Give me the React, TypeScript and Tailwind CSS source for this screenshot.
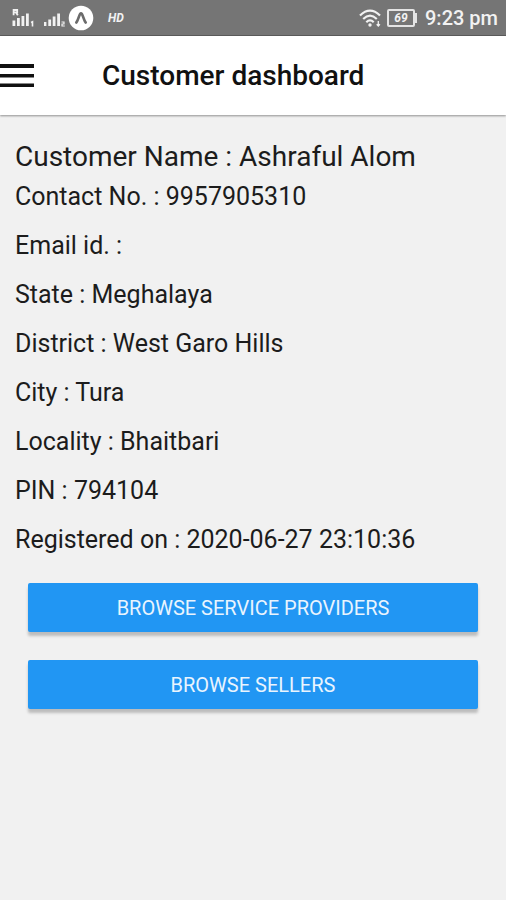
const details = [
  { label: "Contact No.", value: "9957905310" },
  { label: "Email id.", value: "" },
  { label: "State", value: "Meghalaya" },
  { label: "District", value: "West Garo Hills" },
  { label: "City", value: "Tura" },
  { label: "Locality", value: "Bhaitbari" },
  { label: "PIN", value: "794104" },
  { label: "Registered on", value: "2020-06-27 23:10:36" },
];

function SignalOne() {
  return (
    <svg width="24" height="20" viewBox="0 0 24 20" fill="currentColor" aria-hidden="true">
      {/* roaming mark */}
      <path d="M1.6 7.2V2h3.6v2.4H2M4 4.4 5.8 7.2" fill="none" stroke="currentColor" strokeWidth="1.8" />
      <path d="M.5 12.5h2.8V18H.5zM5 10h2.8v8H5zM9.5 8h2.8v10H9.5zM14 5.5h2.8V18H14z" />
      <path d="M19 14.5 20.5 13.8V18.5" fill="none" stroke="currentColor" strokeWidth="1.6" />
    </svg>
  );
}

function SignalTwo() {
  return (
    <svg width="24" height="20" viewBox="0 0 24 20" fill="currentColor" aria-hidden="true">
      <path d="M0 14h2.4v4H0zM4.3 11.5h2.8V18H4.3zM8.7 8.5h2.8V18H8.7zM13.2 5.5H16V18h-2.8z" />
      <path d="M17.5 14H20v2h-2v2h2.8" fill="none" stroke="currentColor" strokeWidth="1.2" />
    </svg>
  );
}

function AppBadge() {
  return (
    <svg width="26" height="26" viewBox="0 0 26 26" aria-hidden="true">
      <circle cx="13" cy="13" r="12.3" fill="#fff" />
      <path
        d="M8.3 17.5C9.9 15.8 11 10.5 12.2 8.8Q13 7.8 13.8 8.8C15 10.5 16.1 15.8 17.7 17.5"
        fill="none"
        stroke="#6b6b6b"
        strokeWidth="2.6"
        strokeLinecap="round"
      />
    </svg>
  );
}

function WifiIcon() {
  return (
    <svg width="22" height="18" viewBox="0 0 22 18" fill="none" stroke="currentColor" strokeWidth="2.2" aria-hidden="true">
      <path d="M1 6.5Q11-3.2 21 6.5M4.2 10Q11 3.4 17.8 10M7.3 13.2Q11 9.6 14.7 13.2" />
      <circle cx="11" cy="16" r="1.7" fill="currentColor" stroke="none" />
      <path d="M19.3 12v5M17.7 15.2 19.3 17l1.6-1.8" strokeWidth="1.3" />
    </svg>
  );
}

function Battery() {
  return (
    <div className="flex items-center">
      <span className="flex h-[18px] w-7 items-center justify-center rounded-xs border-2 border-[#e4e4e4] text-xs leading-none font-bold italic">
        69
      </span>
      <span className="h-2.5 w-0.5 bg-[#e4e4e4]" />
    </div>
  );
}

function StatusBar() {
  return (
    <div className="flex h-9 items-center justify-between border-b border-[#5c5c5c] bg-[#757575] pr-2 pl-3 text-[#f2f2f2]">
      <div className="flex items-center">
        <SignalOne />
        <span className="w-2" />
        <SignalTwo />
        <AppBadge />
        <span className="ml-3.5 text-xs font-bold italic">HD</span>
      </div>
      <div className="flex items-center">
        <WifiIcon />
        <div className="mr-2 ml-1.5">
          <Battery />
        </div>
        <span className="text-xl font-medium">9:23 pm</span>
      </div>
    </div>
  );
}

function ActionButton({ label }: { label: string }) {
  return (
    <button
      type="button"
      className="h-[49px] w-full rounded-xs bg-[#2196f3] text-xl text-[#e9f4fe] uppercase shadow-[0_4px_3px_rgba(0,0,0,0.22)]"
    >
      {label}
    </button>
  );
}

export default function App() {
  return (
    <div className="flex min-h-screen flex-col bg-[#f1f1f1] font-[Roboto,sans-serif] text-[#1c1c1c]">
      <StatusBar />
      <header className="flex h-[79px] items-center bg-white shadow-[0_1px_2px_rgba(0,0,0,0.4)]">
        <button type="button" aria-label="Open menu" className="w-[102px]">
          <svg width="34" height="24" viewBox="0 0 34 24" fill="#111">
            <path d="M0 0h34v4H0zM0 10h34v3.5H0zM0 19.5h34V23H0z" />
          </svg>
        </button>
        <h1 className="text-[28px] font-medium text-[#111]">Customer dashboard</h1>
      </header>
      <main className="px-[15px] pt-6">
        <h2 className="mb-1 text-[28px] leading-9">Customer Name : Ashraful Alom</h2>
        {details.map((d) => (
          <p key={d.label} className="mb-[13px] text-[25px] leading-9">
            {d.label} : {d.value}
          </p>
        ))}
        <div className="flex flex-col gap-7 px-[13px] pt-3">
          <ActionButton label="Browse service providers" />
          <ActionButton label="Browse sellers" />
        </div>
      </main>
    </div>
  );
}
